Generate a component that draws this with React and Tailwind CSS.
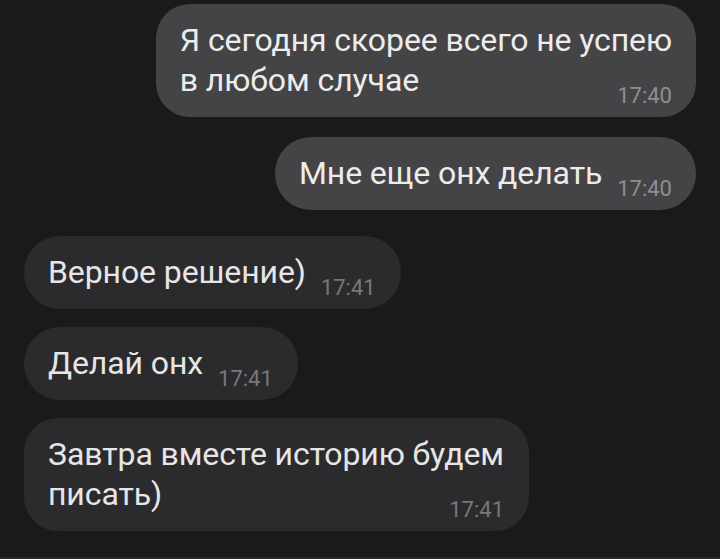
import React from "react";

const messages = [
  { out: true, text: "Я сегодня скорее всего не успею\nв любом случае", time: "17:40", multi: true },
  { out: true, text: "Мне еще онх делать", time: "17:40", space: "mt-[2px]" },
  { out: false, text: "Верное решение)", time: "17:41", space: "mt-[8px]" },
  { out: false, text: "Делай онх", time: "17:41" },
  { out: false, text: "Завтра вместе историю будем\nписать)", time: "17:41", multi: true },
];

function Bubble({ msg }) {
  const bubbleColor = msg.out ? "bg-[#444446] text-[#ececec]" : "bg-[#2b2b2e] text-[#e6e6e6]";
  const timeColor = msg.out ? "text-[#8e8e91]" : "text-[#78787b]";
  const pad = msg.out ? "pl-[24px] pr-[24px]" : "pl-[24px] pr-[25px]";

  if (msg.multi) {
    return (
      <div className={`flex flex-col rounded-[34px] pt-[16px] pb-[17px] ${pad} ${bubbleColor}`}>
        <div className="whitespace-pre-line text-[32px] tracking-[-0.1px] leading-[40px]">{msg.text}</div>
        <div className={`self-end -mt-[22px] h-[22px] relative top-[7px] text-[22px] leading-[22px] ${timeColor}`}>
          {msg.time}
        </div>
      </div>
    );
  }

  return (
    <div className={`flex items-end gap-[15px] rounded-[36px] pt-[16px] pb-[17px] ${pad} ${bubbleColor}`}>
      <span className="text-[32px] tracking-[-0.1px] leading-[40px]">{msg.text}</span>
      <span className={`relative top-[7px] text-[22px] leading-[22px] ${timeColor}`}>{msg.time}</span>
    </div>
  );
}

export default function App() {
  return (
    <div
      className="w-[720px] h-[559px] bg-[#1a1a1a] overflow-hidden flex flex-col"
      style={{ fontFamily: "Roboto, 'Noto Sans', sans-serif" }}
    >
      <div className="flex flex-col gap-[18px] px-[24px] pt-[4px] flex-1">
        {messages.map((msg, i) => (
          <div
            key={i}
            className={`flex ${msg.out ? "justify-end" : "justify-start"} ${msg.space || ""}`}
          >
            <Bubble msg={msg} />
          </div>
        ))}
      </div>
      <div className="h-[2px] bg-[#2a2a2b]" />
    </div>
  );
}
